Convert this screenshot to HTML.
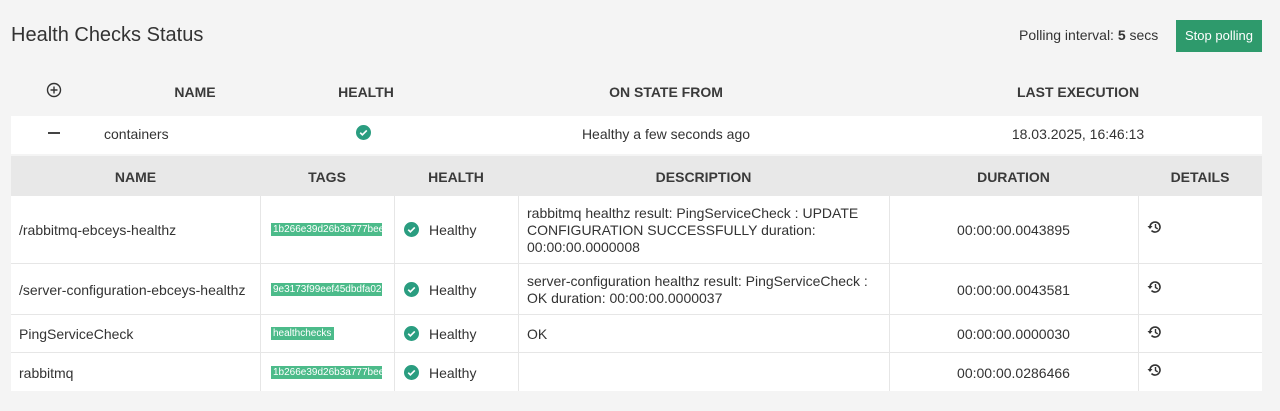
<!DOCTYPE html>
<html><head><style>
*{margin:0;padding:0;box-sizing:border-box}
body{width:1280px;height:411px;background:#f4f4f4;font-family:"Liberation Sans",sans-serif;color:#333;font-size:14px;position:relative;overflow:hidden}
.a{position:absolute;white-space:nowrap}
.h{font-weight:bold;color:#3a3a3a}
.c{text-align:center}
.bg{position:absolute;background:#fff}
.vl{position:absolute;width:1px;background:#e6e6e6}
.hl{position:absolute;height:1px;background:#e6e6e6;left:11px;width:1251px}
.tag{position:absolute;background:#4cbb8a;color:#fff;font-size:10px;height:13px;line-height:13px;padding-left:2px;overflow:hidden;white-space:nowrap}
.ck{position:absolute;width:15px;height:15px}
</style></head><body>
<div class="a" style="left:11px;top:24px;font-size:20px;color:#333">Health Checks Status</div>
<div class="a" style="left:1019px;top:27px;font-size:14px;color:#333">Polling interval: <b>5</b> secs</div>
<div class="a" style="left:1176px;top:20px;width:86px;height:32px;background:#2e9a6c;color:#fff;font-size:13px;line-height:32px;text-align:center">Stop polling</div>

<svg class="a" style="left:46px;top:82px" width="16" height="16" viewBox="0 0 16 16"><circle cx="8" cy="8" r="6.5" fill="none" stroke="#333" stroke-width="1.4"/><path d="M8 4.5v7M4.5 8h7" stroke="#333" stroke-width="1.4"/></svg>
<div class="a h c" style="left:145px;width:100px;top:84px">NAME</div>
<div class="a h c" style="left:316px;width:100px;top:84px">HEALTH</div>
<div class="a h c" style="left:566px;width:200px;top:84px">ON STATE FROM</div>
<div class="a h c" style="left:978px;width:200px;top:84px">LAST EXECUTION</div>

<div class="bg" style="left:11px;top:116px;width:1251px;height:38px"></div>
<div class="a" style="left:48px;top:132px;width:12px;height:2px;background:#444"></div>
<div class="a" style="left:104px;top:126px">containers</div>
<svg class="ck" style="left:356px;top:125px" viewBox="0 0 16 16"><circle cx="8" cy="8" r="8" fill="#2a9d80"/><path d="M4.5 8.2l2.3 2.3 4.7-4.7" fill="none" stroke="#fff" stroke-width="1.8"/></svg>
<div class="a c" style="left:516px;width:300px;top:126px">Healthy a few seconds ago</div>
<div class="a c" style="left:978px;width:200px;top:126px">18.03.2025, 16:46:13</div>

<div class="a" style="left:11px;top:156px;width:1251px;height:40px;background:#e8e8e8"></div>
<div class="a h c" style="left:11px;width:249px;top:169px">NAME</div>
<div class="a h c" style="left:260px;width:134px;top:169px">TAGS</div>
<div class="a h c" style="left:394px;width:124px;top:169px">HEALTH</div>
<div class="a h c" style="left:518px;width:371px;top:169px">DESCRIPTION</div>
<div class="a h c" style="left:889px;width:249px;top:169px">DURATION</div>
<div class="a h c" style="left:1138px;width:124px;top:169px">DETAILS</div>

<div class="bg" style="left:11px;top:196px;width:1251px;height:195px"></div>
<div class="hl" style="top:263px"></div><div class="hl" style="top:314px"></div><div class="hl" style="top:352px"></div>
<div class="vl" style="left:260px;top:196px;height:195px"></div>
<div class="vl" style="left:394px;top:196px;height:195px"></div>
<div class="vl" style="left:518px;top:196px;height:195px"></div>
<div class="vl" style="left:889px;top:196px;height:195px"></div>
<div class="vl" style="left:1138px;top:196px;height:195px"></div>

<!-- rows -->
<div class="a" style="left:19px;top:222px">/rabbitmq-ebceys-healthz</div>
<div class="tag" style="left:271px;top:223px;width:111px">1b266e39d26b3a777bee</div>
<svg class="ck" style="left:404px;top:222px" viewBox="0 0 16 16"><circle cx="8" cy="8" r="8" fill="#2a9d80"/><path d="M4.5 8.2l2.3 2.3 4.7-4.7" fill="none" stroke="#fff" stroke-width="1.8"/></svg>
<div class="a" style="left:429px;top:222px">Healthy</div>
<div class="a" style="left:527px;top:205px;line-height:17px">rabbitmq healthz result: PingServiceCheck : UPDATE<br>CONFIGURATION SUCCESSFULLY duration:<br>00:00:00.0000008</div>
<div class="a c" style="left:889px;width:249px;top:222px">00:00:00.0043895</div>

<div class="a" style="left:19px;top:282px">/server-configuration-ebceys-healthz</div>
<div class="tag" style="left:271px;top:283px;width:111px">9e3173f99eef45dbdfa02</div>
<svg class="ck" style="left:404px;top:282px" viewBox="0 0 16 16"><circle cx="8" cy="8" r="8" fill="#2a9d80"/><path d="M4.5 8.2l2.3 2.3 4.7-4.7" fill="none" stroke="#fff" stroke-width="1.8"/></svg>
<div class="a" style="left:429px;top:282px">Healthy</div>
<div class="a" style="left:527px;top:273px;line-height:17px">server-configuration healthz result: PingServiceCheck :<br>OK duration: 00:00:00.0000037</div>
<div class="a c" style="left:889px;width:249px;top:282px">00:00:00.0043581</div>

<div class="a" style="left:19px;top:326px">PingServiceCheck</div>
<div class="tag" style="left:271px;top:327px;width:63px">healthchecks</div>
<svg class="ck" style="left:404px;top:326px" viewBox="0 0 16 16"><circle cx="8" cy="8" r="8" fill="#2a9d80"/><path d="M4.5 8.2l2.3 2.3 4.7-4.7" fill="none" stroke="#fff" stroke-width="1.8"/></svg>
<div class="a" style="left:429px;top:326px">Healthy</div>
<div class="a" style="left:527px;top:326px">OK</div>
<div class="a c" style="left:889px;width:249px;top:326px">00:00:00.0000030</div>

<div class="a" style="left:19px;top:365px">rabbitmq</div>
<div class="tag" style="left:271px;top:366px;width:111px">1b266e39d26b3a777bee</div>
<svg class="ck" style="left:404px;top:365px" viewBox="0 0 16 16"><circle cx="8" cy="8" r="8" fill="#2a9d80"/><path d="M4.5 8.2l2.3 2.3 4.7-4.7" fill="none" stroke="#fff" stroke-width="1.8"/></svg>
<div class="a" style="left:429px;top:365px">Healthy</div>
<div class="a c" style="left:889px;width:249px;top:365px">00:00:00.0286466</div>

<!-- history icons -->
<svg class="a" style="left:1147px;top:219px" width="16" height="16" viewBox="0 0 16 16"><path d="M3 8a5 5 0 1 1 1.5 3.6" fill="none" stroke="#333" stroke-width="1.6"/><path d="M0.5 7h5L3 10z" fill="#333"/><path d="M8.5 5v3.5l2.2 1.4" fill="none" stroke="#333" stroke-width="1.4"/></svg>
<svg class="a" style="left:1147px;top:279px" width="16" height="16" viewBox="0 0 16 16"><path d="M3 8a5 5 0 1 1 1.5 3.6" fill="none" stroke="#333" stroke-width="1.6"/><path d="M0.5 7h5L3 10z" fill="#333"/><path d="M8.5 5v3.5l2.2 1.4" fill="none" stroke="#333" stroke-width="1.4"/></svg>
<svg class="a" style="left:1147px;top:324px" width="16" height="16" viewBox="0 0 16 16"><path d="M3 8a5 5 0 1 1 1.5 3.6" fill="none" stroke="#333" stroke-width="1.6"/><path d="M0.5 7h5L3 10z" fill="#333"/><path d="M8.5 5v3.5l2.2 1.4" fill="none" stroke="#333" stroke-width="1.4"/></svg>
<svg class="a" style="left:1147px;top:362px" width="16" height="16" viewBox="0 0 16 16"><path d="M3 8a5 5 0 1 1 1.5 3.6" fill="none" stroke="#333" stroke-width="1.6"/><path d="M0.5 7h5L3 10z" fill="#333"/><path d="M8.5 5v3.5l2.2 1.4" fill="none" stroke="#333" stroke-width="1.4"/></svg>
</body></html>
